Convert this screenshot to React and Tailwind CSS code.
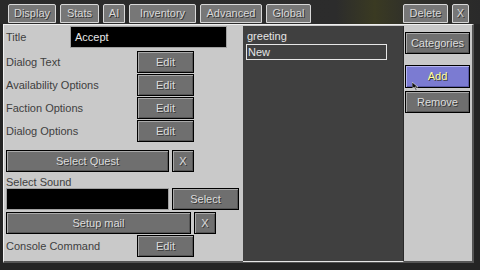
import React from 'react'

const font = { fontFamily: '"Liberation Sans", Arial, sans-serif' }

function McButton({ children, className = '', hover = false }) {
  return (
    <div
      className={`flex items-center justify-center border border-black text-[11px] leading-none [text-shadow:1px_1px_0_#3a3a3a] ${
        hover
          ? 'bg-[#7b7bd2] text-[#ffffa0] shadow-[inset_1px_1px_0_#b4b4f0,inset_-1px_-1px_0_#5a5aa8]'
          : 'bg-[#6f6f6f] text-[#dcdcdc] shadow-[inset_1px_1px_0_#a9a9a9,inset_-1px_-1px_0_#555555]'
      } ${className}`}
    >
      {children}
    </div>
  )
}

function Tab({ label, className = '' }) {
  return (
    <div
      className={`h-[19px] flex items-center justify-center bg-[#777777] border border-[#d8d8d8] rounded-t-[2px] text-[11px] text-[#d8d8d8] [text-shadow:1px_1px_0_#333] ${className}`}
    >
      {label}
    </div>
  )
}

function Label({ children, className = '' }) {
  return <div className={`text-[11px] text-[#404040] leading-none ${className}`}>{children}</div>
}

function EditRow({ label }) {
  return (
    <div className="flex items-center h-[22px]">
      <Label className="w-[131px]">{label}</Label>
      <McButton className="w-[57px] h-[22px]">Edit</McButton>
    </div>
  )
}

export default function App() {
  return (
    <div className="w-[480px] h-[270px] bg-[#242424] overflow-hidden flex flex-col" style={font}>
      {/* tab strip */}
      <div className="h-[24px] flex items-end pb-[1px] bg-[linear-gradient(90deg,#2a2a2a_0%,#2c2c2c_70%,#3a3a22_78%,#30302a_85%,#2a2a2a_100%)]">
        <div className="flex items-end gap-[4px] pl-[8px]">
          <Tab label="Display" className="w-[48px]" />
          <Tab label="Stats" className="w-[39px]" />
          <Tab label="AI" className="w-[22px]" />
          <Tab label="Inventory" className="w-[67px]" />
          <Tab label="Advanced" className="w-[62px]" />
          <Tab label="Global" className="w-[45px]" />
        </div>
        <div className="flex items-end gap-[4px] ml-auto mr-[11px]">
          <Tab label="Delete" className="w-[45px]" />
          <Tab label="X" className="w-[17px]" />
        </div>
      </div>

      {/* main panel */}
      <div className="ml-[3px] w-[471px] h-[239px] bg-[#c9c9c9] border-t border-l border-[#f0f0f0] border-r-2 border-r-[#555] border-b-2 border-b-[#555] flex">
        {/* left column */}
        <div className="w-[239px] pl-[2px] pt-[1px] flex flex-col">
          <div className="flex items-center h-[22px]">
            <Label className="w-[64px]">Title</Label>
            <div className="w-[157px] h-[22px] bg-black border border-[#a0a0a0] flex items-center pl-[4px] text-[11px] text-[#e8e8e8]">
              Accept
            </div>
          </div>
          <div className="mt-[3px] flex flex-col gap-[1px]">
            <EditRow label="Dialog Text" />
            <EditRow label="Availability Options" />
            <EditRow label="Faction Options" />
            <EditRow label="Dialog Options" />
          </div>
          <div className="mt-[8px] flex gap-[3px]">
            <McButton className="w-[163px] h-[22px]">Select Quest</McButton>
            <McButton className="w-[22px] h-[22px]">X</McButton>
          </div>
          <Label className="mt-[5px]">Select Sound</Label>
          <div className="flex gap-[3px]">
            <div className="w-[163px] h-[22px] bg-black border border-[#a0a0a0]" />
            <McButton className="w-[67px] h-[22px]">Select</McButton>
          </div>
          <div className="mt-[2px] flex gap-[3px]">
            <McButton className="w-[185px] h-[22px]">Setup mail</McButton>
            <McButton className="w-[22px] h-[22px]">X</McButton>
          </div>
          <div className="mt-[1px]">
            <EditRow label="Console Command" />
          </div>
        </div>

        {/* list */}
        <div className="w-[161px] mt-[1px] h-[236px] bg-[#404040] border-r border-[#2a2a2a] border-b border-b-[#e6e6e6] pt-[4px] px-[3px] flex flex-col">
          <div className="text-[11px] text-[#e6e6e6] leading-none pl-[1px] h-[13px] flex items-center">greeting</div>
          <div className="mt-[1px] w-[141px] h-[16px] border border-[#e6e6e6] text-[11px] text-[#e6e6e6] leading-none flex items-center pl-[1px]">
            New
          </div>
        </div>

        {/* right buttons */}
        <div className="w-[66px] pl-[1px] pt-[7px] flex flex-col relative">
          <McButton className="w-[65px] h-[22px]">Categories</McButton>
          <McButton hover className="mt-[11px] w-[65px] h-[23px]">Add</McButton>
          <McButton className="mt-[3px] w-[65px] h-[22px]">Remove</McButton>
          <svg className="absolute left-[8px] top-[57px]" width="7" height="9" viewBox="0 0 7 9">
            <path d="M0 0 L0 7 L2 5 L4 9 L5 8 L3 5 L6 5 Z" fill="#111" stroke="#eee" strokeWidth="0.6" />
          </svg>
        </div>
      </div>
    </div>
  )
}
